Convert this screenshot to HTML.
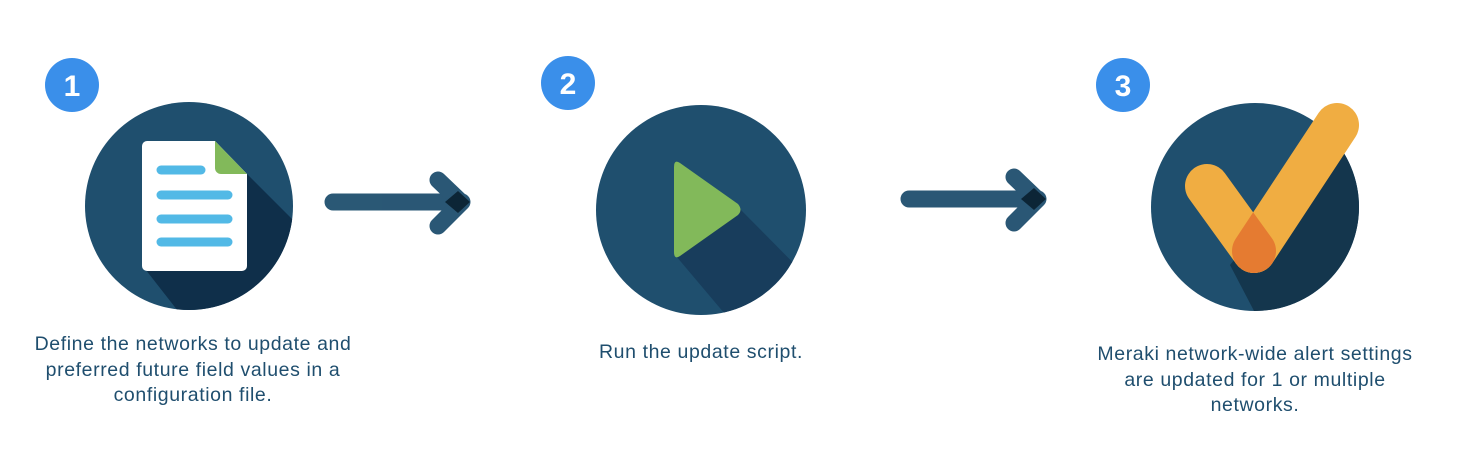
<!DOCTYPE html>
<html><head><meta charset="utf-8"><style>
html,body{margin:0;padding:0;background:#fff;width:1474px;height:464px;overflow:hidden;position:relative}
.t{position:absolute;font-family:"Liberation Sans",sans-serif;font-size:19.5px;letter-spacing:0.6px;color:#1f4e6e;text-align:center;line-height:25.5px;white-space:nowrap}
</style></head><body>
<svg width="1474" height="464" style="position:absolute;left:0;top:0">
<defs>
<clipPath id="c1"><circle cx="189" cy="206" r="104"/></clipPath>
<clipPath id="c2"><circle cx="701" cy="210" r="105"/></clipPath>
<clipPath id="c3"><circle cx="1255" cy="207" r="104"/></clipPath>
<mask id="m3" maskUnits="userSpaceOnUse" x="0" y="0" width="1474" height="464"><rect width="1474" height="464" fill="#000"/><line x1="1254" y1="251" x2="1337" y2="125" stroke="#fff" stroke-width="44" stroke-linecap="round"/></mask>
</defs>
<circle cx="72" cy="85" r="27" fill="#3a8fea"/>
<text x="72" y="96" font-family="Liberation Sans" font-weight="bold" font-size="30" fill="#fff" text-anchor="middle">1</text>
<circle cx="568" cy="83" r="27" fill="#3a8fea"/>
<text x="568" y="94" font-family="Liberation Sans" font-weight="bold" font-size="30" fill="#fff" text-anchor="middle">2</text>
<circle cx="1123" cy="85" r="27" fill="#3a8fea"/>
<text x="1123" y="96" font-family="Liberation Sans" font-weight="bold" font-size="30" fill="#fff" text-anchor="middle">3</text>
<circle cx="189" cy="206" r="104" fill="#1f4f6e"/>
<g clip-path="url(#c1)"><polygon points="247,174 247,265 142,265 185,320 330,320 330,257" fill="#0f2f4a"/></g>
<path d="M147,141 H215 L247,174 V266 a5,5 0 0 1 -5,5 H147 a5,5 0 0 1 -5,-5 V146 a5,5 0 0 1 5,-5z" fill="#fff"/>
<path d="M215,141 L247,174 H221 a6,6 0 0 1 -6,-6z" fill="#82b95a"/>
<g stroke="#52b9e6" stroke-width="9" stroke-linecap="round">
<line x1="161" y1="170" x2="201" y2="170"/>
<line x1="161" y1="195" x2="228" y2="195"/>
<line x1="161" y1="219" x2="228" y2="219"/>
<line x1="161" y1="242" x2="228" y2="242"/>
</g>
<g stroke="#1f4f6e" stroke-width="17" stroke-linecap="round" fill="none" opacity="0.95">
<line x1="333" y1="202" x2="462" y2="202"/>
<line x1="438" y1="180" x2="461" y2="202"/>
<line x1="438" y1="226" x2="461" y2="203"/>
</g>
<polygon points="445,202 458,191 470,202 458,213" fill="#0c2536"/>
<circle cx="701" cy="210" r="105" fill="#1f4f6e"/>
<g clip-path="url(#c2)"><polygon points="738,207 676,256 730,320 830,320 830,300" fill="#183d5c"/></g>
<path d="M680,163 L738,204 Q743,210 738,215 L680,256 Q674,260 674,252 V167 Q674,159 680,163z" fill="#82b95a"/>
<g stroke="#1f4f6e" stroke-width="17" stroke-linecap="round" fill="none" opacity="0.95">
<line x1="909" y1="199" x2="1038" y2="199"/>
<line x1="1014" y1="177" x2="1037" y2="199"/>
<line x1="1014" y1="223" x2="1037" y2="200"/>
</g>
<polygon points="1021,199 1034,188 1046,199 1034,210" fill="#0c2536"/>
<circle cx="1255" cy="207" r="104" fill="#1f4f6e"/>
<g clip-path="url(#c3)"><polygon points="1337,125 1380,150 1380,330 1264,330 1230,265 1300,180" fill="#14364d"/></g>
<g stroke="#f0ad42" stroke-width="44" stroke-linecap="round" fill="none">
<line x1="1207" y1="186" x2="1254" y2="251"/>
<line x1="1254" y1="251" x2="1337" y2="125"/>
</g>
<g mask="url(#m3)"><line x1="1207" y1="186" x2="1254" y2="251" stroke="#e57b31" stroke-width="44" stroke-linecap="round"/></g>
</svg>
<div class="t" style="left:13px;width:360px;top:332px">Define the networks to update and<br>preferred future field values in a<br>configuration file.</div>
<div class="t" style="left:521px;width:360px;top:340px">Run the update script.</div>
<div class="t" style="left:1075px;width:360px;top:342px">Meraki network-wide alert settings<br>are updated for 1 or multiple<br>networks.</div>
</body></html>
